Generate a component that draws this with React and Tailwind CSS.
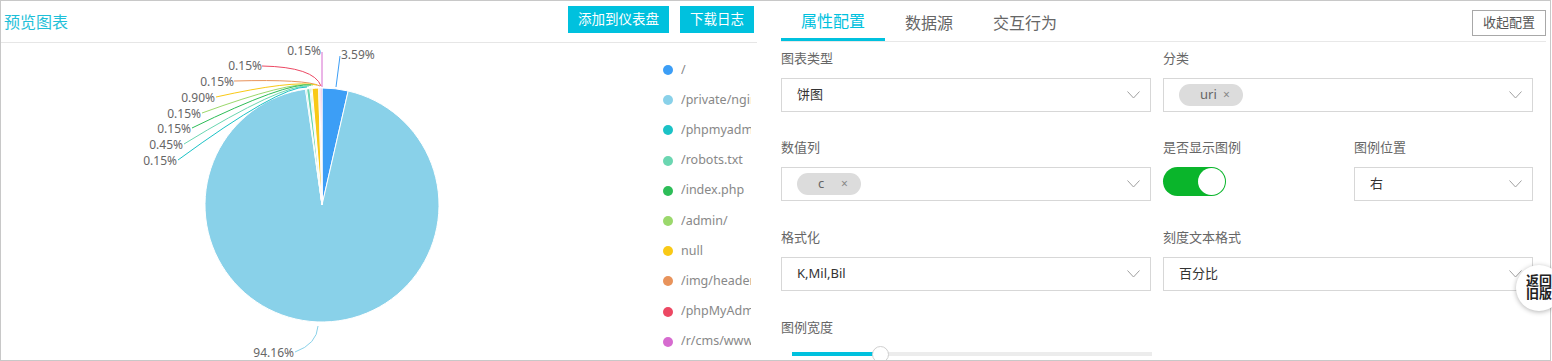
import React from 'react';

const slices = [
  { name: '/', value: 3.59, color: '#3c9ef6' },
  { name: '/private/nginx/access.log', value: 94.16, color: '#89d1e9' },
  { name: '/phpmyadmin/', value: 0.15, color: '#1bc2c6' },
  { name: '/robots.txt', value: 0.45, color: '#6bd6b1' },
  { name: '/index.php', value: 0.15, color: '#2dbd58' },
  { name: '/admin/', value: 0.15, color: '#9bd86c' },
  { name: 'null', value: 0.9, color: '#f9c916' },
  { name: '/img/header.png', value: 0.15, color: '#e8935b' },
  { name: '/phpMyAdmin/', value: 0.15, color: '#ec4863' },
  { name: '/r/cms/www/', value: 0.15, color: '#d66bcf' },
];

// leader lines and percent labels, page coordinates
const labels = [
  { text: '3.59%', x: 341, y: 54, anchor: 'start', d: 'M336,87 L340,56', color: '#3c9ef6' },
  { text: '0.15%', x: 321, y: 50, anchor: 'end', d: 'M322,87 L322,52', color: '#d66bcf' },
  { text: '0.15%', x: 262, y: 65, anchor: 'end', d: 'M321,86 Q314,67 262,66', color: '#ec4863' },
  { text: '0.15%', x: 234, y: 81, anchor: 'end', d: 'M320,86 Q306,79 234,81', color: '#e8935b' },
  { text: '0.90%', x: 215, y: 97, anchor: 'end', d: 'M317,85 Q292,80 216,97', color: '#f9c916' },
  { text: '0.15%', x: 201, y: 113, anchor: 'end', d: 'M313,85 Q290,81 202,113', color: '#9bd86c' },
  { text: '0.15%', x: 191, y: 128, anchor: 'end', d: 'M311,85 Q286,82 192,128', color: '#2dbd58' },
  { text: '0.45%', x: 183, y: 144, anchor: 'end', d: 'M309,86 Q282,84 184,144', color: '#6bd6b1' },
  { text: '0.15%', x: 177, y: 160, anchor: 'end', d: 'M307,87 Q279,86 178,160', color: '#1bc2c6' },
  { text: '94.16%', x: 294, y: 352, anchor: 'end', d: 'M318,326 Q317,344 295,352', color: '#89d1e9' },
];

const PieChart = () => {
  const cx = 322;
  const cy = 205;
  const r = 117;
  const total = slices.reduce((s, d) => s + d.value, 0);
  let start = -Math.PI / 2;

  const paths = slices.map((s) => {
    const angle = (s.value / total) * Math.PI * 2;
    const end = start + angle;
    const x1 = cx + r * Math.cos(start);
    const y1 = cy + r * Math.sin(start);
    const x2 = cx + r * Math.cos(end);
    const y2 = cy + r * Math.sin(end);
    const large = angle > Math.PI ? 1 : 0;
    start = end;
    return { d: `M${cx},${cy} L${x1},${y1} A${r},${r} 0 ${large} 1 ${x2},${y2} Z`, color: s.color };
  });

  return (
    <svg width="660" height="317" viewBox="1 43 660 317" className="shrink-0">
      {paths.map((p, i) => (
        <path key={i} d={p.d} fill={p.color} stroke="#fff" strokeWidth="1" />
      ))}
      {labels.map((l, i) => (
        <g key={i}>
          <path d={l.d} fill="none" stroke={l.color} strokeWidth="1" />
          <text x={l.x} y={l.y} textAnchor={l.anchor} dominantBaseline="central" fontSize="12" fill="#666">
            {l.text}
          </text>
        </g>
      ))}
    </svg>
  );
};

const Chevron = () => (
  <svg width="13" height="8" viewBox="0 0 13 8">
    <path d="M0.5,0.5 L6.5,7 L12.5,0.5" fill="none" stroke="#a0a0a0" strokeWidth="1" />
  </svg>
);

const Select = ({ children }) => (
  <div className="h-[34px] border border-[#d7d7d7] flex items-center justify-between pl-[15px] pr-[10px] text-[13px] text-[#333]">
    <div className="flex items-center">{children}</div>
    <Chevron />
  </div>
);

const Tag = ({ label }) => (
  <span className="w-[64px] h-[22px] rounded-full bg-[#dcdcdc] flex items-center pl-[21px] text-[13px] text-[#666]">
    <span className="w-[23px]">{label}</span>
    <span className="text-[#888] text-[12px]">×</span>
  </span>
);

const Label = ({ children }) => (
  <div className="h-[20px] leading-[20px] text-[13px] text-[#666]">{children}</div>
);

export default function App() {
  return (
    <div className="relative w-[1552px] h-[361px] bg-white font-['Noto_Sans','Noto_Sans_CJK_SC',sans-serif]">
      <div className="w-[1551px] h-[361px] border border-[#c8c8c8] flex overflow-hidden">
        {/* left: chart preview */}
        <div className="w-[756px] flex flex-col shrink-0">
          <div className="h-[42px] border-b border-[#e6e6e6] flex items-start justify-between pl-[3px] pr-[3px]">
            <span className="mt-[9px] text-[16px] text-[#1fbfd8]">预览图表</span>
            <div className="flex gap-[11px] mt-[5px]">
              <button className="w-[101px] h-[27px] bg-[#00c1de] text-white text-[13.5px] flex items-center justify-center">
                添加到仪表盘
              </button>
              <button className="w-[74px] h-[27px] bg-[#00c1de] text-white text-[13.5px] flex items-center justify-center">
                下载日志
              </button>
            </div>
          </div>
          <div className="flex flex-1">
            <PieChart />
            <div className="flex flex-col pt-[12px]">
              {slices.map((s) => (
                <div key={s.name} className="h-[30.2px] flex items-center">
                  <span className="w-[10px] h-[10px] rounded-full ml-[2px] mr-[8px] shrink-0" style={{ backgroundColor: s.color }} />
                  <span className="w-[70px] overflow-hidden whitespace-nowrap text-[12.5px] text-[#888]">{s.name}</span>
                </div>
              ))}
            </div>
          </div>
        </div>

        {/* right: config panel */}
        <div className="flex-1 pl-[24px] pr-[4px]">
          <div className="h-[41px] border-b border-[#e8e8e8] flex justify-between">
            <div className="flex">
              <div className="h-full px-[20px] flex items-center text-[16px] text-[#00c1de] border-b-[3px] border-[#00c1de] pt-[3px]">
                属性配置
              </div>
              <div className="h-full px-[20px] flex items-center text-[16px] text-[#666] pt-[3px]">数据源</div>
              <div className="h-full px-[20px] flex items-center text-[16px] text-[#666] pt-[3px]">交互行为</div>
            </div>
            <button className="mt-[9px] w-[74px] h-[26px] border border-[#a8a8a8] bg-white text-[13px] text-[#555] flex items-center justify-center">
              收起配置
            </button>
          </div>

          <div className="w-[752px] grid grid-cols-2 gap-x-[12px]">
            <div className="mt-[6px]">
              <Label>图表类型</Label>
              <div className="mt-[10px]">
                <Select>饼图</Select>
              </div>
            </div>
            <div className="mt-[6px]">
              <Label>分类</Label>
              <div className="mt-[10px]">
                <Select>
                  <Tag label="uri" />
                </Select>
              </div>
            </div>

            <div className="mt-[25px]">
              <Label>数值列</Label>
              <div className="mt-[10px]">
                <Select>
                  <Tag label="c" />
                </Select>
              </div>
            </div>
            <div className="mt-[25px] grid grid-cols-2 gap-x-[12px]">
              <div>
                <Label>是否显示图例</Label>
                <div className="mt-[10px] w-[63px] h-[29px] rounded-full bg-[#0ab52b] flex items-center justify-end pr-[1px]">
                  <span className="w-[27px] h-[27px] rounded-full bg-white" />
                </div>
              </div>
              <div>
                <Label>图例位置</Label>
                <div className="mt-[10px]">
                  <Select>右</Select>
                </div>
              </div>
            </div>

            <div className="mt-[26px]">
              <Label>格式化</Label>
              <div className="mt-[10px]">
                <Select>K,Mil,Bil</Select>
              </div>
            </div>
            <div className="mt-[26px]">
              <Label>刻度文本格式</Label>
              <div className="mt-[10px]">
                <Select>百分比</Select>
              </div>
            </div>

            <div className="mt-[26px] col-span-2">
              <Label>图例宽度</Label>
              <div className="mt-[8px] h-[18px] ml-[11px] w-[360px] relative flex items-center">
                <div className="w-full h-[4px] bg-[#ececec] flex">
                  <div className="w-[82px] h-full bg-[#00c1de]" />
                </div>
                <span className="absolute left-[80px] top-[0.5px] w-[17px] h-[17px] rounded-full bg-white border border-[#cfcfcf]" />
              </div>
            </div>
          </div>
        </div>
      </div>

      {/* floating switch back button */}
      <div className="absolute left-[1516px] top-[265px] w-[46px] h-[46px] rounded-full bg-white shadow-[0_1px_5px_rgba(0,0,0,0.3)] flex items-center pl-[10px] pb-[2px]">
        <span className="text-[13px] leading-[13px] font-semibold text-[#222] w-[26px]">返回旧版</span>
      </div>
    </div>
  );
}
